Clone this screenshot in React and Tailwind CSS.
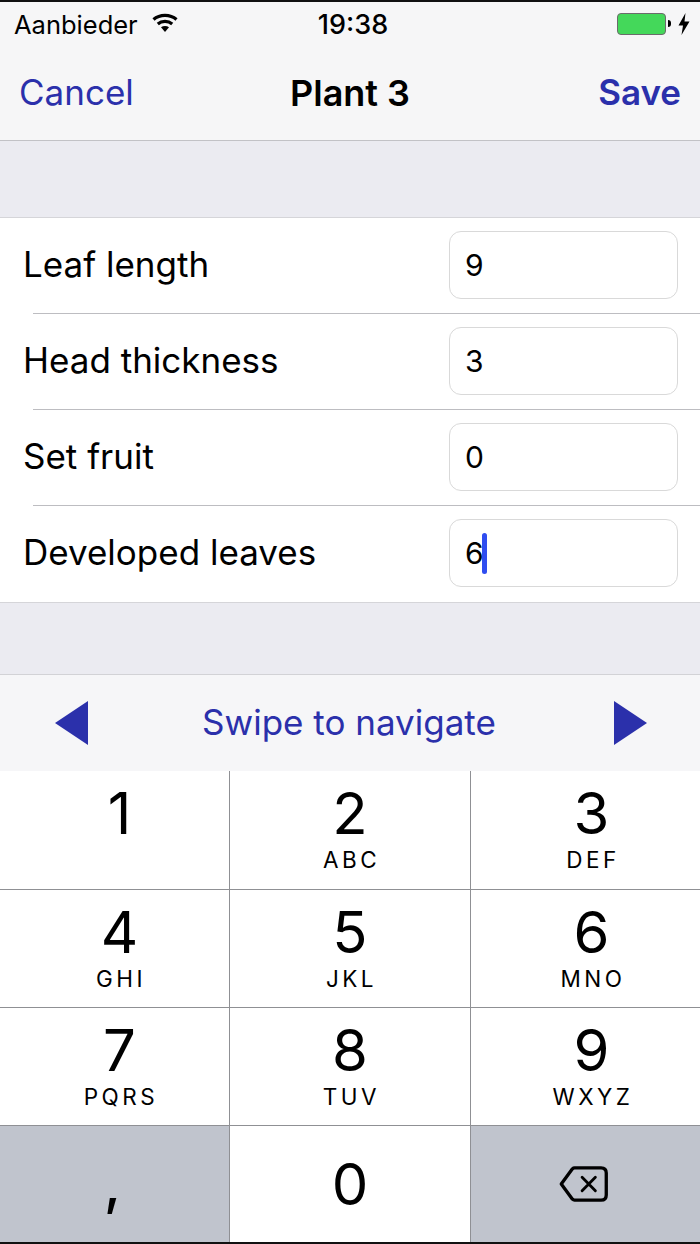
const fields = [
  { label: "Leaf length", value: "9" },
  { label: "Head thickness", value: "3" },
  { label: "Set fruit", value: "0" },
  { label: "Developed leaves", value: "6", active: true },
];

const keys = [
  { digit: "1", letters: "", col: "pl-[10px]" },
  { digit: "2", letters: "ABC", col: "" },
  { digit: "3", letters: "DEF", col: "pl-[12px]" },
  { digit: "4", letters: "GHI", col: "pl-[10px]" },
  { digit: "5", letters: "JKL", col: "" },
  { digit: "6", letters: "MNO", col: "pl-[12px]" },
  { digit: "7", letters: "PQRS", col: "pl-[10px]" },
  { digit: "8", letters: "TUV", col: "" },
  { digit: "9", letters: "WXYZ", col: "pl-[12px]" },
];

const WifiIcon = () => (
  <svg className="-mt-[5px]" width="26" height="20" viewBox="0 0 26 20">
    <path d="M1.5 6.5C7.8 1 18.2 1 24.5 6.5" fill="none" stroke="#000" strokeWidth="3.2" />
    <path d="M5.8 11C9.8 7.6 16.2 7.6 20.2 11" fill="none" stroke="#000" strokeWidth="3.2" />
    <path d="M9 14.2L13 19L17 14.2C14.8 12.6 11.2 12.6 9 14.2Z" fill="#000" />
  </svg>
);

const Battery = () => (
  <div className="flex items-center -mt-[3px]">
    <div className="w-[49px] h-[22px] rounded-[4px] border border-[#6b6b6b] bg-[#44d85a]" />
    <div className="w-[3px] h-[7px] ml-[2px] rounded-r-full bg-black" />
    <svg className="ml-[7px]" width="12" height="22" viewBox="0 0 12 22">
      <path d="M7.5 0L0.5 12.5H5L3.5 22L11.5 8.5H6.5Z" fill="#000" />
    </svg>
  </div>
);

const Key = ({ digit, letters, col }) => (
  <div className={`bg-white flex flex-col items-center pt-[8px] ${col}`}>
    <span className="text-[58px] leading-[68px] text-black">{digit}</span>
    {letters && <span className="text-[22.5px] leading-[26px] tracking-[3.5px] ml-[3px] text-black">{letters}</span>}
  </div>
);

export default function App() {
  return (
    <div className="w-[700px] h-[1244px] overflow-hidden bg-[#ebebf1] flex flex-col font-['Inter','Liberation_Sans',sans-serif]">
      <div className="h-[2px] bg-[#111] shrink-0" />
      <div className="bg-[#f6f6f7] h-[139px] border-b border-[#c2c2c6] shrink-0">
        <div className="relative h-[45px] flex items-center justify-between pl-[14px] pr-[10px] pt-[1px]">
          <div className="flex items-center gap-[14px]">
            <span className="text-[25.5px] text-black">Aanbieder</span>
            <WifiIcon />
          </div>
          <span className="absolute left-[6px] right-0 text-center text-[27px] font-medium text-black">19:38</span>
          <Battery />
        </div>
        <div className="flex items-center justify-between px-[19px] h-[80px] pt-[11px] relative">
          <span className="text-[35px] text-[#2b30ab]">Cancel</span>
          <span className="absolute left-0 right-0 text-center text-[36px] font-semibold text-black">Plant 3</span>
          <span className="text-[35px] font-semibold text-[#2b30ab]">Save</span>
        </div>
      </div>

      <div className="h-[76px] shrink-0" />

      <div className="bg-white border-y border-[#d5d5d9] shrink-0">
        {fields.map((field, i) => (
          <div key={field.label} className="relative h-[96px] flex items-center justify-between pl-[23px] pr-[22px] pb-[2px]">
            <span className="text-[35px] text-black mb-[2px]">{field.label}</span>
            <div className="w-[229px] h-[68px] rounded-[12px] border border-[#d9d9d9] bg-white flex items-center pl-[15px]">
              <span className="text-[30px] text-black">{field.value}</span>
              {field.active && <span className="w-[5px] h-[41px] -ml-[2px] rounded-full bg-[#2f4df0]" />}
            </div>
            {i < fields.length - 1 && <div className="absolute left-[33px] right-0 bottom-0 h-px bg-[#bdbdc1]" />}
          </div>
        ))}
      </div>

      <div className="h-[71px] shrink-0" />

      <div className="bg-[#f6f6f8] h-[97px] border-t border-[#d2d2d6] shrink-0 flex items-center justify-between pl-[54px] pr-[52px]">
        <svg width="36" height="46" viewBox="0 0 36 46">
          <path d="M34 1V45L1 23Z" fill="#2b30ab" />
        </svg>
        <span className="text-[35px] text-[#2b30ab] mb-[2px] mr-[4px]">Swipe to navigate</span>
        <svg width="36" height="46" viewBox="0 0 36 46">
          <path d="M2 1V45L35 23Z" fill="#2b30ab" />
        </svg>
      </div>

      <div className="grid grid-cols-[229px_240px_1fr] grid-rows-[118px_117px_117px_116px] gap-px bg-[#8f9094] h-[471px] shrink-0">
        {keys.map((key) => (
          <Key key={key.digit} {...key} />
        ))}
        <div className="bg-[#c0c4cd] flex justify-center pr-[4px] pt-[30px] text-black">
          <span className="text-[56px] leading-[56px] font-medium">,</span>
        </div>
        <div className="bg-white flex items-center justify-center">
          <span className="text-[58px] leading-[68px] text-black">0</span>
        </div>
        <div className="bg-[#c0c4cd] flex items-center justify-center pr-[3px]">
          <svg width="50" height="36" viewBox="0 0 52 38" fill="none" stroke="#000" strokeWidth="3.5" strokeLinejoin="round" strokeLinecap="round">
            <path d="M16 2H44C47.5 2 49.5 4 49.5 7.5V30.5C49.5 34 47.5 36 44 36H16C15 36 14.4 35.6 13.8 35L2 19L13.8 3C14.4 2.4 15 2 16 2Z" />
            <path d="M24 12L38 26M38 12L24 26" strokeWidth="3" />
          </svg>
        </div>
      </div>
      <div className="h-[2px] bg-[#111] shrink-0" />
    </div>
  );
}
